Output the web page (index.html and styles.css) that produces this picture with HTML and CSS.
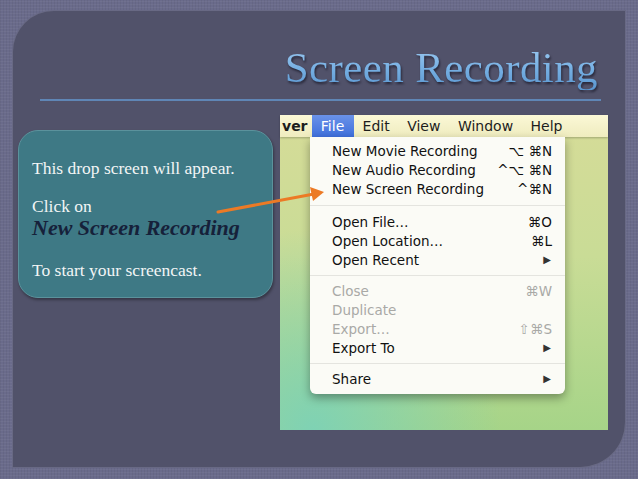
FILE: index.html
```html
<!DOCTYPE html>
<html>
<head>
<meta charset="utf-8">
<link rel="stylesheet" href="styles.css">
</head>
<body>
<div class="panel">
  <header class="head"><h1 class="title">Screen Recording</h1></header>
  <div class="rule"></div>
  <div class="content">
    <div class="callout">
      <p class="line">This drop screen will appear.</p>
      <p class="line click">Click on</p>
      <p class="emph">New Screen Recording</p>
      <p class="line last">To start your screencast.</p>
    </div>
    <div class="shot">
      <div class="menubar">
        <span class="mi app">ver</span>
        <span class="mi active">File</span>
        <span class="mi">Edit</span>
        <span class="mi">View</span>
        <span class="mi">Window</span>
        <span class="mi">Help</span>
      </div>
      <div class="dropdown">
        <div class="row"><span>New Movie Recording</span><span class="key">⌥ ⌘N</span></div>
        <div class="row"><span>New Audio Recording</span><span class="key">^⌥ ⌘N</span></div>
        <div class="row"><span>New Screen Recording</span><span class="key">^⌘N</span></div>
        <div class="sep"></div>
        <div class="row"><span>Open File…</span><span class="key">⌘O</span></div>
        <div class="row"><span>Open Location…</span><span class="key">⌘L</span></div>
        <div class="row"><span>Open Recent</span><span class="tri">▶</span></div>
        <div class="sep tight"></div>
        <div class="row dis"><span>Close</span><span class="key">⌘W</span></div>
        <div class="row dis"><span>Duplicate</span><span class="key"></span></div>
        <div class="row dis"><span>Export…</span><span class="key">⇧⌘S</span></div>
        <div class="row"><span>Export To</span><span class="tri">▶</span></div>
        <div class="sep tight"></div>
        <div class="row"><span>Share</span><span class="tri">▶</span></div>
      </div>
    </div>
  </div>
  <svg class="arrow" width="614" height="458" viewBox="0 0 614 458">
    <line x1="205" y1="201" x2="301" y2="183" stroke="#ec7a25" stroke-width="3" stroke-linecap="round"/>
    <polygon points="311,181 297,176 300,190" fill="#ec7a25"/>
  </svg>
</div>
</body>
</html>
```
FILE: styles.css
```css
html, body {
  margin: 0;
  padding: 0;
}
body {
  width: 638px;
  height: 479px;
  background: #6a6b8b;
  background-image:
    repeating-linear-gradient(0deg, rgba(255,255,255,0.04) 0 1px, transparent 1px 3px),
    repeating-linear-gradient(90deg, rgba(0,0,0,0.05) 0 1px, transparent 1px 3px);
  overflow: hidden;
  padding-top: 10px;
  padding-left: 12px;
  box-sizing: border-box;
}
.panel {
  position: relative;
  width: 614px;
  height: 458px;
  box-sizing: border-box;
  background: #51526a;
  border: 1px solid rgba(150,150,180,0.35);
  border-top-left-radius: 42px;
  border-bottom-right-radius: 46px;
}
.head {
  padding-top: 35px;
  display: flex;
  justify-content: flex-end;
  padding-right: 27px;
}
.title {
  margin: 0;
  font-family: "Liberation Serif", "DejaVu Serif", serif;
  font-weight: normal;
  font-size: 43px;
  line-height: 44px;
  letter-spacing: 0.4px;
  color: #7fb4e4;
  background: linear-gradient(180deg, #9cc9f0 0%, #74aee2 55%, #5a95cf 100%);
  -webkit-background-clip: text;
  background-clip: text;
  -webkit-text-fill-color: transparent;
  filter: drop-shadow(1px 2px 1px rgba(20,20,35,0.7));
}
.rule {
  margin: 9px 0 0 27px;
  width: 561px;
  height: 2px;
  background: #5f86b6;
}
.content {
  display: flex;
  align-items: flex-start;
  gap: 7px;
  margin-top: 14px;
  padding-left: 5px;
}
.callout {
  width: 255px;
  height: 168px;
  margin-top: 15px;
  box-sizing: border-box;
  background: #3e7985;
  border: 1px solid #5b929c;
  border-radius: 20px;
  box-shadow: 1px 2px 3px rgba(0,0,0,0.35);
  padding: 27px 0 0 13px;
  font-family: "Liberation Serif", "DejaVu Serif", serif;
  color: #f2f5f5;
}
.callout p {
  margin: 0;
}
.callout .line {
  font-size: 17.5px;
  line-height: 20px;
}
.callout .click {
  margin-top: 18px;
}
.callout .emph {
  font-size: 22px;
  line-height: 24px;
  font-weight: bold;
  font-style: italic;
  color: #16213a;
}
.callout .last {
  margin-top: 20px;
}
.shot {
  position: relative;
  width: 328px;
  height: 315px;
  flex: none;
  background:
    radial-gradient(ellipse at 10% 100%, #7fd2b4 0%, rgba(127,210,180,0) 45%),
    linear-gradient(180deg, #d6dc98 0%, #c9dc96 45%, #a6d488 100%);
}
.menubar {
  height: 22px;
  display: flex;
  align-items: stretch;
  background: linear-gradient(180deg, #fbf8d6 0%, #efecbf 100%);
  font-family: "DejaVu Sans", "Liberation Sans", sans-serif;
  font-size: 14px;
  color: #1d1d1d;
  box-shadow: 0 1px 2px rgba(0,0,0,0.25);
}
.mi {
  display: flex;
  align-items: center;
  padding: 0 8.5px 0 9px;
}
.mi.app {
  padding: 0 5px 0 2px;
  font-weight: bold;
}
.mi.active {
  background: linear-gradient(180deg, #6a92e8 0%, #3e6fdc 100%);
  color: #ffffff;
  padding: 0;
  width: 42px;
  margin-left: -1px;
  box-sizing: border-box;
  justify-content: center;
}
.dropdown {
  position: absolute;
  left: 30px;
  top: 22px;
  width: 255px;
  box-sizing: border-box;
  padding: 4px 13px 6px 22px;
  background: #fbfbf6;
  border-radius: 0 0 6px 6px;
  box-shadow: 0 4px 10px rgba(0,0,0,0.35);
  font-family: "DejaVu Sans", "Liberation Sans", sans-serif;
  font-size: 13.5px;
  color: #111111;
}
.row {
  height: 19px;
  display: flex;
  align-items: center;
  justify-content: space-between;
}
.row.dis {
  color: #a9a9a6;
}
.key {
  font-size: 13.5px;
  white-space: pre;
}
.tri {
  font-size: 10px;
  color: #333333;
  padding-right: 1px;
}
.sep {
  height: 14px;
  margin: 0 -13px 0 -22px;
  background: linear-gradient(#e4e4df, #e4e4df) center / 100% 1px no-repeat;
}
.sep.tight {
  height: 12px;
}
.arrow {
  position: absolute;
  left: 0;
  top: 0;
  pointer-events: none;
}
```
